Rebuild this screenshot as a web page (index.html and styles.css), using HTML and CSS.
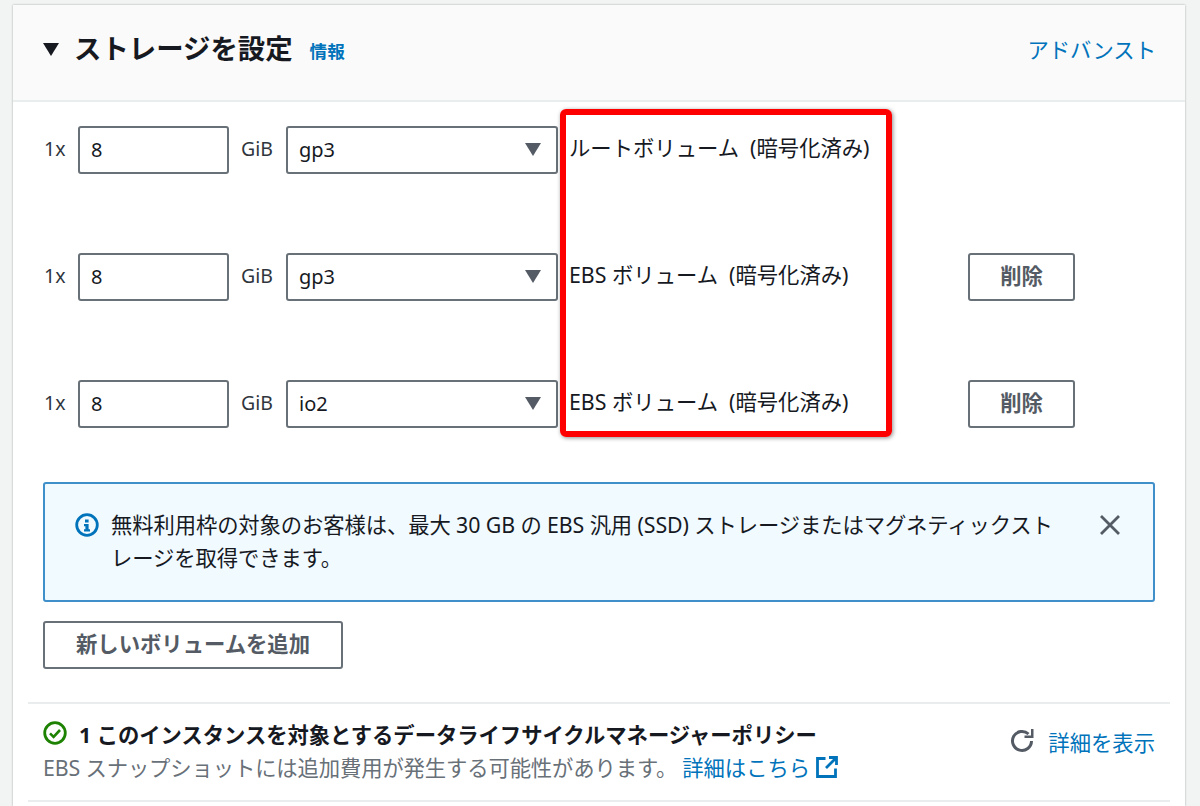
FILE: index.html
```html
<!DOCTYPE html>
<html lang="ja">
<head>
<meta charset="utf-8">
<title>ストレージを設定</title>
<link rel="stylesheet" href="styles.css">
</head>
<body>
<section class="card">
  <header class="card-head">
    <div class="head-left">
      <svg class="caret" viewBox="0 0 16 14" width="16" height="14"><path d="M0 0H16L8 13Z"/></svg>
      <h2 class="title">ストレージを設定</h2>
      <a class="info">情報</a>
    </div>
    <a class="link advanced">アドバンスト</a>
  </header>
  <div class="card-body">
    <div class="volumes">
      <div class="vol-row">
        <span class="label">1x</span>
        <div class="input">8</div>
        <span class="label">GiB</span>
        <div class="select">gp3<svg class="sel-caret" viewBox="0 0 16 14" width="16" height="14"><path d="M0 0H16L8 13Z"/></svg></div>
        <span class="vol-name root">ルートボリューム&nbsp; (暗号化済み)</span>
      </div>
      <div class="vol-row">
        <span class="label">1x</span>
        <div class="input">8</div>
        <span class="label">GiB</span>
        <div class="select">gp3<svg class="sel-caret" viewBox="0 0 16 14" width="16" height="14"><path d="M0 0H16L8 13Z"/></svg></div>
        <span class="vol-name">EBS ボリューム&nbsp; (暗号化済み)</span>
        <button class="btn del">削除</button>
      </div>
      <div class="vol-row">
        <span class="label">1x</span>
        <div class="input">8</div>
        <span class="label">GiB</span>
        <div class="select">io2<svg class="sel-caret" viewBox="0 0 16 14" width="16" height="14"><path d="M0 0H16L8 13Z"/></svg></div>
        <span class="vol-name">EBS ボリューム&nbsp; (暗号化済み)</span>
        <button class="btn del">削除</button>
      </div>
    </div>
    <div class="alert">
      <svg class="alert-icon" viewBox="0 0 24 24" width="24" height="24"><circle cx="12" cy="12" r="10.3" fill="none" stroke="#0073bb" stroke-width="2.8"/><path d="M10 6.5h3.6v3H10zM9 11h4.6v5.2H15v2.3H9v-2.3h1.4v-2.9H9z" fill="#0073bb"/></svg>
      <p class="alert-text">無料利用枠の対象のお客様は、最大 30 GB の EBS 汎用 (SSD) ストレージまたはマグネティックストレージを取得できます。</p>
      <svg class="alert-close" viewBox="0 0 20 20" width="20" height="20"><path d="M1 1L19 19M19 1L1 19" stroke="#545b64" stroke-width="2.8" fill="none"/></svg>
    </div>
    <button class="btn add">新しいボリュームを追加</button>
    <div class="policy">
      <div class="policy-main">
        <div class="policy-title">
          <svg viewBox="0 0 24 24" width="24" height="24"><circle cx="12" cy="12" r="10.3" fill="none" stroke="#1d8102" stroke-width="2.8"/><path d="M7 12.3l3.6 3.6L17 9" fill="none" stroke="#1d8102" stroke-width="2.6"/></svg>
          <strong>1 このインスタンスを対象とするデータライフサイクルマネージャーポリシー</strong>
        </div>
        <div class="policy-sub"><span class="sub-text">EBS スナップショットには追加費用が発生する可能性があります。</span><a class="link more">詳細はこちら<svg viewBox="0 0 22 22" width="22" height="22"><path d="M9.5 2.5H1.5V20.5H19.5V12.5" fill="none" stroke="#0073bb" stroke-width="2.8"/><path d="M13 1.5H20.5V9M20 2L10 12" fill="none" stroke="#0073bb" stroke-width="2.8"/></svg></a></div>
      </div>
      <div class="policy-side">
        <svg viewBox="0 0 26 26" width="26" height="26"><path d="M21.5 13A9.5 9.5 0 1 1 18.5 6" fill="none" stroke="#545b64" stroke-width="3"/><path d="M23.5 1V10H14.5V7.4H21V1Z" fill="#545b64"/></svg>
        <a class="link">詳細を表示</a>
      </div>
    </div>
    <div class="bottom-rule"></div>
  </div>
</section>
<div class="highlight"></div>
</body>
</html>
```
FILE: styles.css
```css
* { box-sizing: border-box; }
html, body { height: 100%; }
body {
  margin: 0;
  padding: 5px 15px 0 13px;
  background: #f2f3f3;
  color: #16191f;
  font-family: "Noto Sans", "Noto Sans CJK JP", sans-serif;
  font-size: 21.33px;
  overflow: hidden;
}
.card {
  background: #fff;
  height: 801px;
  box-shadow: 0 0 2px rgba(0, 28, 36, .35);
}
.card-head {
  height: 97px;
  background: #fafafa;
  border-bottom: 2px solid #eaeded;
  display: flex;
  align-items: center;
  justify-content: space-between;
  padding: 0 29px 8px 30px;
}
.head-left { display: flex; align-items: center; }
.caret { fill: #16191f; margin-right: 15px; margin-top: 2px; }
.title { margin: 0; font-size: 27.4px; font-weight: 700; line-height: 36px; }
.info { color: #0073bb; font-size: 17.6px; font-weight: 700; margin-left: 17px; margin-top: 4px; }
.link { color: #0073bb; }
.card-body { padding: 24px 30px 0; }
.volumes { display: flex; flex-direction: column; gap: 79px; }
.vol-row { display: flex; align-items: center; height: 48px; }
.label { color: #2f353d; font-size: 19.5px; padding-bottom: 4px; }
.vol-row .label:first-child { margin-left: 1px; width: 34px; }
.input, .select {
  height: 48px;
  border: 2px solid #687078;
  border-radius: 3px;
  background: #fff;
  display: flex;
  align-items: center;
  padding: 0 11px 1px;
  font-size: 20px;
}
.input { width: 151px; margin-right: 12px; }
.vol-row .label:nth-child(3) { width: 45px; }
.select { width: 272px; justify-content: space-between; margin-right: 11px; }
.sel-caret { fill: #545b64; margin-right: 4px; margin-top: 1px; }
.vol-name { width: 399px; white-space: nowrap; padding-bottom: 8px; }
.btn {
  height: 48px;
  background: #fff;
  border: 2px solid #687078;
  border-radius: 3px;
  color: #545b64;
  font: 700 21.33px "Noto Sans", "Noto Sans CJK JP", sans-serif;
  padding: 0 0 5px;
}
.del { width: 107px; }
.alert {
  margin-top: 54px;
  height: 120px;
  background: #f1faff;
  border: 2px solid #3f8fcb;
  border-radius: 3px;
  display: flex;
  align-items: flex-start;
  padding: 28px 33px 0 30px;
}
.alert-icon { flex: none; margin: 1px 12px 0 0; }
.alert-text { margin: -4px 0 0; flex: 1; line-height: 33px; padding-right: 37px; letter-spacing: -.1px; }
.alert-close { flex: none; margin-top: 3px; }
.add { display: block; margin-top: 19px; width: 300px; }
.policy {
  margin: 33px -15px 0;
  border-top: 2px solid #eaeded;
  height: 98px;
  padding: 14px 15px 0;
  display: flex;
  justify-content: space-between;
}
.policy-title { display: flex; align-items: center; gap: 12px; height: 30px; }
.policy-title strong { font-weight: 700; white-space: nowrap; letter-spacing: -.03px; }
.policy-sub { color: #687078; margin-top: 3px; display: flex; align-items: center; white-space: pre; }
.sub-text { letter-spacing: -.12px; }
.more { display: inline-flex; align-items: center; gap: 6px; margin-left: 5px; }
.more svg { margin-top: 1px; }
.policy-side { display: flex; align-items: center; gap: 12px; height: 46px; }
.bottom-rule { margin: 0 -15px; border-top: 2px solid #eaeded; }
.highlight {
  position: absolute;
  left: 560px;
  top: 109px;
  width: 332px;
  height: 328px;
  border: 6px solid #fe0000;
  border-radius: 6px;
  box-shadow: 1px 1px 4px rgba(0, 0, 0, .45);
}
```
